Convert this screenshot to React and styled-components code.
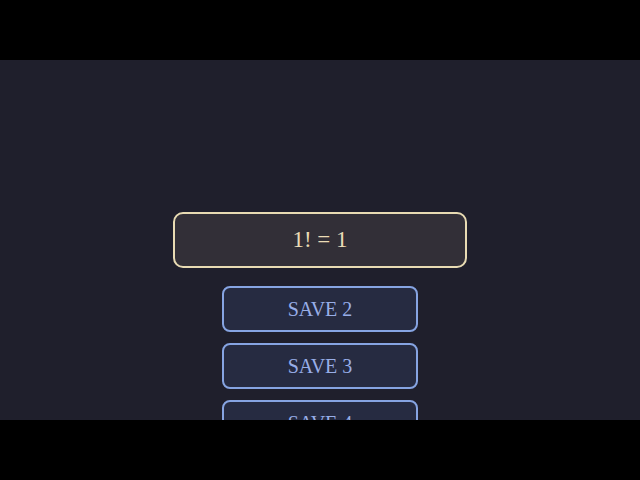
import styled, { createGlobalStyle } from 'styled-components';

const GlobalStyle = createGlobalStyle`
  html, body {
    margin: 0;
    padding: 0;
    background: #000;
  }
`;

const Screen = styled.div`
  width: 640px;
  height: 480px;
  display: flex;
  align-items: center;
  justify-content: center;
`;

const Stage = styled.div`
  width: 640px;
  height: 360px;
  flex-shrink: 0;
  background-color: #1f1f2c;
  overflow: hidden;
  display: flex;
  flex-direction: column;
  align-items: center;
  padding-top: 152px;
  box-sizing: border-box;
  font-family: 'Liberation Serif', 'DejaVu Serif', serif;
`;

const Result = styled.div`
  width: 294px;
  height: 56px;
  flex-shrink: 0;
  box-sizing: border-box;
  border: 2px solid #e8dbb3;
  border-radius: 10px;
  background-color: #322f37;
  color: #eadcb6;
  font-size: 23px;
  display: flex;
  align-items: center;
  justify-content: center;
  margin-bottom: 18px;
`;

const SaveList = styled.div`
  display: flex;
  flex-direction: column;
  flex-shrink: 0;
  gap: 11px;
`;

const SaveButton = styled.button`
  width: 196px;
  height: 46px;
  flex-shrink: 0;
  box-sizing: border-box;
  border: 2px solid #86a4e2;
  border-radius: 8px;
  background-color: #262b41;
  color: #98aee8;
  font-family: inherit;
  font-size: 20px;
  padding: 0;
  cursor: pointer;
`;

export default function App() {
  const slots = [2, 3, 4];

  return (
    <>
      <GlobalStyle />
      <Screen>
        <Stage>
          <Result>1! = 1</Result>
          <SaveList>
            {slots.map((n) => (
              <SaveButton key={n}>SAVE {n}</SaveButton>
            ))}
          </SaveList>
        </Stage>
      </Screen>
    </>
  );
}
